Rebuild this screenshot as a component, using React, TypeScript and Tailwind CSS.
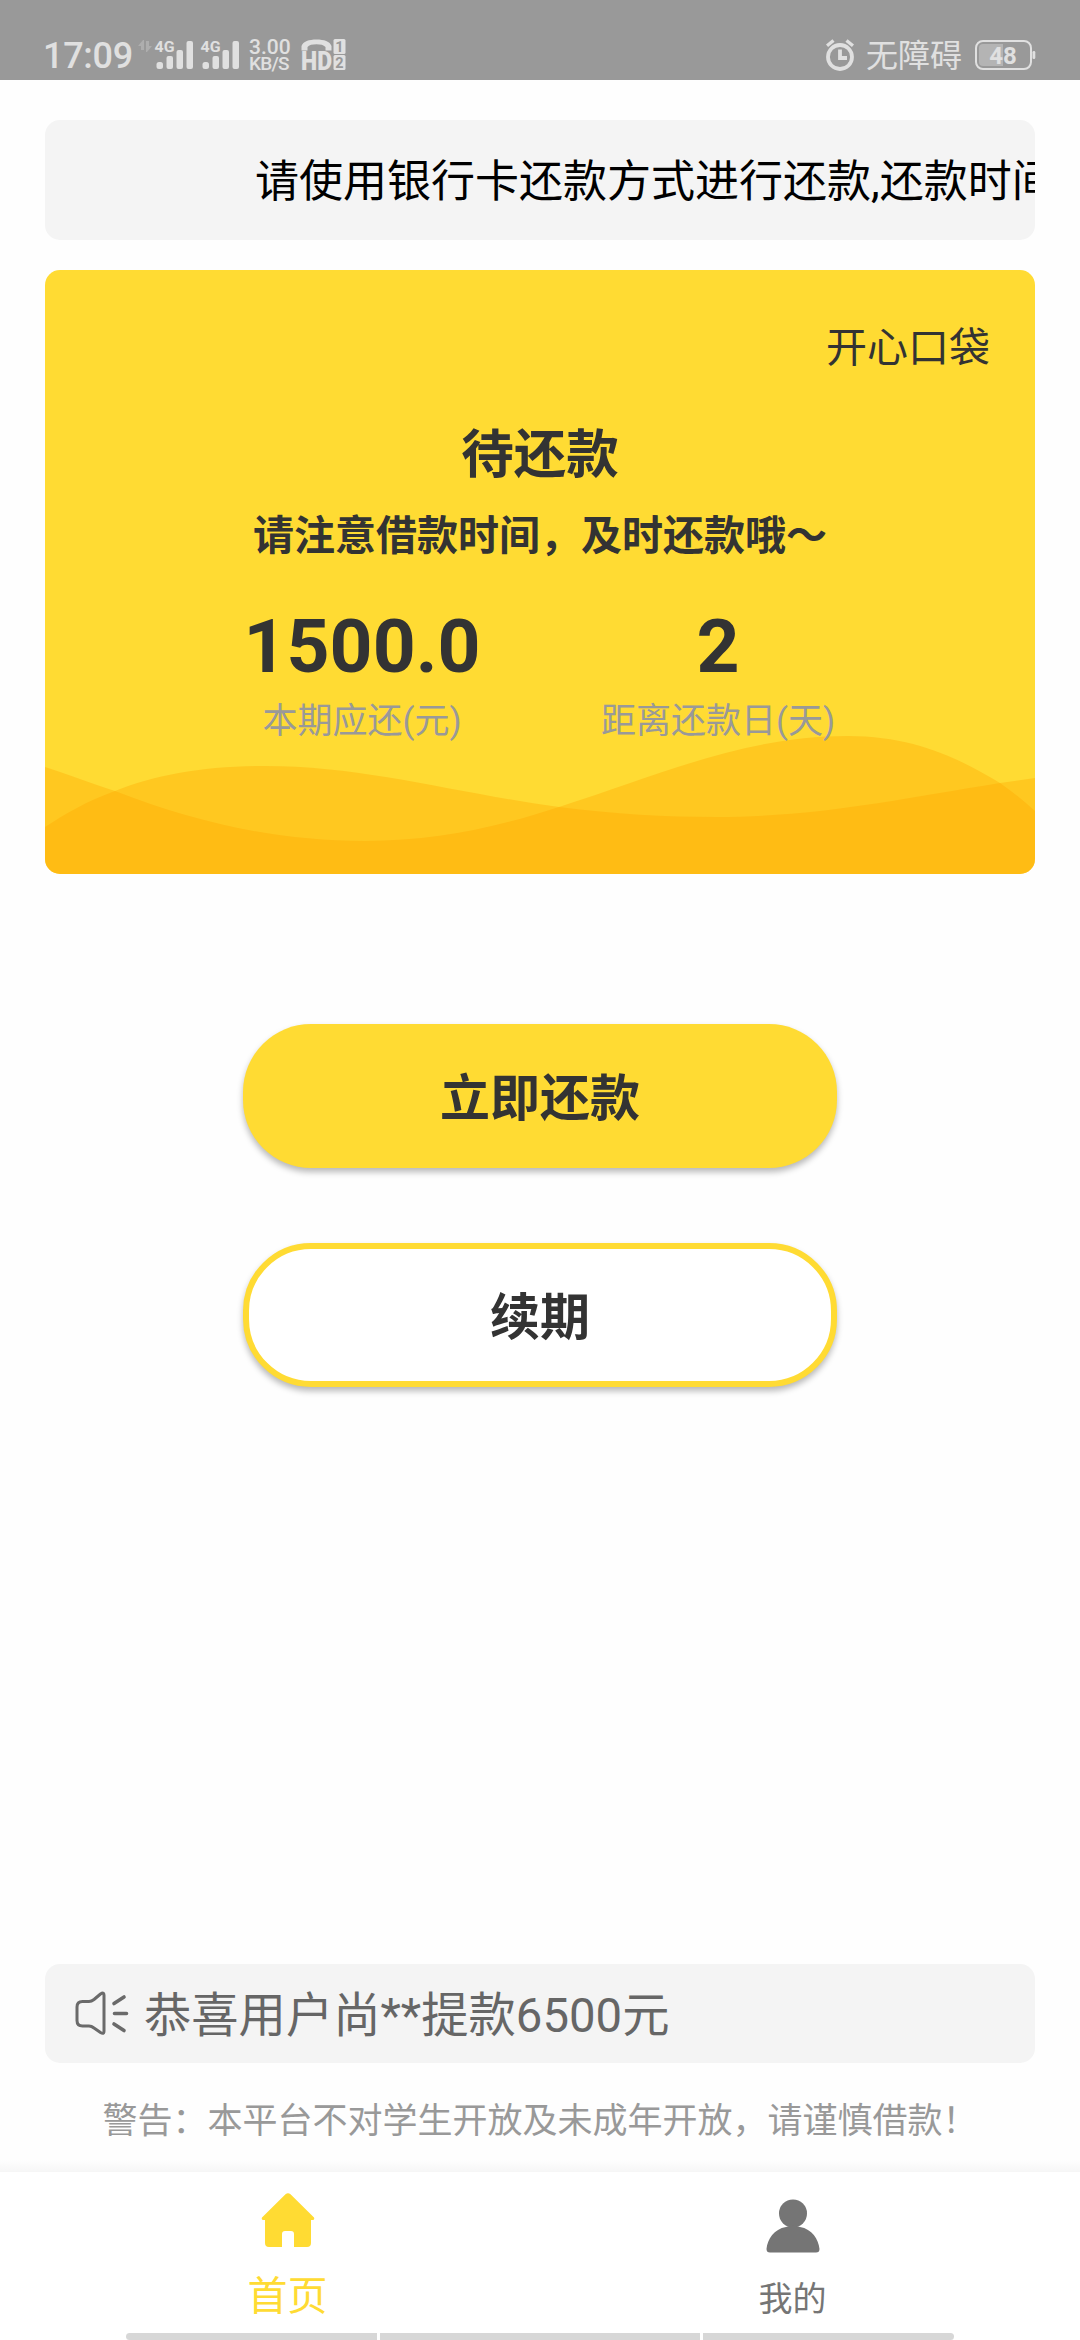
import React from 'react';

// Status bar glyph colour and the bar behind it
const BAR_FG = '#e0e0e0';
const BAR_BG = '#999999';

const SignalIcon: React.FC = () => (
  <svg className="overflow-visible" width="40" height="32" viewBox="0 0 40 32" fill={BAR_FG}>
    <text x="0.5" y="12.5" fontSize="15" fontWeight="700" textLength="20" lengthAdjust="spacingAndGlyphs">
      4G
    </text>
    <rect x="2.5" y="23" width="6.5" height="7" rx="2.5" />
    <rect x="12.5" y="17" width="6.5" height="13" rx="2" />
    <rect x="22.5" y="11" width="6.5" height="19" rx="2" />
    <rect x="32.5" y="2" width="6.5" height="28" rx="2" />
  </svg>
);

const DataArrowsIcon: React.FC = () => (
  <svg width="14" height="12" viewBox="0 0 14 12" fill="#aeaeae">
    <path d="M0 6 5 0h1v10H3V6zM14 6 9 12H8V1h3v5z" />
  </svg>
);

const HdIcon: React.FC = () => (
  <svg className="overflow-visible" width="45" height="32" viewBox="0 0 45 32" fill={BAR_FG}>
    <path d="M.5 11.500V7C2 2.500 8 .5 15.500 .5S29 2.500 30.500 7v4.500h-6V8c-2-2-5-2.700-9-2.700S8 6 6.500 8v3.500z" />
    <text x="0" y="31" fontSize="25" fontWeight="900" textLength="31" lengthAdjust="spacingAndGlyphs">
      HD
    </text>
    <rect x="32.500" y="0" width="12" height="15" rx="1.500" />
    <rect x="32.500" y="16" width="12" height="15" rx="1.500" />
    <g fill={BAR_BG} fontSize="14.500" fontWeight="700" textAnchor="middle">
      <text x="38.300" y="12.800">1</text>
      <text x="38.500" y="28.700">2</text>
    </g>
  </svg>
);

const AlarmIcon: React.FC = () => (
  <svg width="28" height="32" viewBox="0 0 28 32" fill="none" stroke={BAR_FG}>
    <circle cx="14" cy="18" r="12" strokeWidth="3.800" />
    <path d="M14 10.500v8.500h7" strokeWidth="3.800" />
    <path d="M1 6.800 7.500 1.500M27 6.800 20.500 1.500" strokeWidth="3.400" />
  </svg>
);

const BatteryIcon: React.FC = () => (
  <svg width="61" height="30" viewBox="0 0 61 30">
    <rect x="1" y="1" width="55" height="28" rx="7" fill="none" stroke={BAR_FG} strokeWidth="2" />
    <path d="M8 4h20v22H8a4 4 0 0 1-4-4V8a4 4 0 0 1 4-4z" fill="#b4b4b4" />
    <rect x="57.500" y="11" width="2.800" height="8" rx="1.300" fill={BAR_FG} />
    <text x="28" y="24" fontSize="24" fontWeight="700" textAnchor="middle" fill={BAR_FG}>
      48
    </text>
  </svg>
);

const StatusBar: React.FC = () => (
  <div className="flex h-20 items-start justify-between bg-[#999999] pl-[43px] pr-[44px] pt-[39px] text-[#e0e0e0]">
    <div className="flex items-start">
      <span className="w-[95px] text-[36px] font-medium leading-[35px] tracking-[-0.3px]">17:09</span>
      <div className="w-4 pt-px">
        <DataArrowsIcon />
      </div>
      <div className="flex gap-1.5">
        <SignalIcon />
        <SignalIcon />
      </div>
      <div className="ml-[9px] flex w-[52px] flex-col pt-px text-[21px] font-medium leading-[15px]">
        <span>3.00</span>
        <span className="mt-px text-[19px] tracking-[-0.8px]">KB/S</span>
      </div>
      <HdIcon />
    </div>
    <div className="flex items-start">
      <AlarmIcon />
      <span className="ml-3 w-[109px] text-[32px] leading-[34px]">无障碍</span>
      <div className="pt-px">
        <BatteryIcon />
      </div>
    </div>
  </div>
);

// Two overlapping translucent waves at the bottom of the card
const Waves: React.FC = () => (
  <svg className="absolute bottom-0 left-0" width="990" height="140" viewBox="0 0 990 140" fill="#ffa700" fillOpacity="0.36">
    <path d="M0 33C25 41 45 49 70 57C150 88 230 107 320 107C390 107 450 94 514 73C620 39 700 2 803 2C870 2 915 25 955 49C968 58 979 67 990 77V140H0Z" />
    <path d="M0 93C20 80 42 67 70 57C110 41 160 32 220 32C320 32 410 59 514 73C570 80 620 83 671 83C770 83 850 66 955 49L990 44V140H0Z" />
  </svg>
);

interface StatProps {
  value: string;
  label: string;
}

const Stat: React.FC<StatProps> = ({ value, label }) => (
  <div className="flex w-[356px] flex-col items-center">
    <span className="text-[75px] font-bold leading-[88px] text-[#333333]">{value}</span>
    <span className="mt-[11px] text-[35px] leading-[42px] text-[#999999]">{label}</span>
  </div>
);

const LoanCard: React.FC = () => (
  <section className="relative mx-[45px] mt-[30px] h-[604px] overflow-hidden rounded-[15px] bg-[#ffdb33] text-[#333333]">
    <Waves />
    <div className="relative flex flex-col items-center">
      <div className="mt-[53px] self-end pr-[45px] text-[41px] leading-[50px]">开心口袋</div>
      <h1 className="mt-[51px] text-[52.500px] font-bold leading-[62px]">待还款</h1>
      <p className="mt-[25px] text-[41px] font-bold leading-[50px]">请注意借款时间，及时还款哦～</p>
      <div className="mt-[41px] flex">
        <Stat value="1500.0" label="本期应还(元)" />
        <Stat value="2" label="距离还款日(天)" />
      </div>
    </div>
  </section>
);

const SpeakerIcon: React.FC = () => (
  <svg width="54" height="46" viewBox="0 0 54 46" fill="none" stroke="#6a6a6a" strokeWidth="3" strokeLinecap="round" strokeLinejoin="round">
    <path d="M2 16Q2 10.500 7.500 10.500H14Q16.500 10.500 19 8.500L25.500 3Q29 .8 29 4V40Q29 43.800 25.500 41.500L19 37Q16.500 35 14 35H7.500Q2 35 2 29.500Z" />
    <path d="M39 12.500 49 6M39.500 22.500h12M39 33 49 39.500" strokeWidth="3.600" />
  </svg>
);

const HomeIcon: React.FC = () => (
  <svg width="54" height="54" viewBox="0 0 54 54" fill="#ffdb33">
    <path d="M24.500 1.200Q27 -.6 29.500 1.200L53 24.500Q54 27 51.500 27H50V50Q50 54 46 54H33V41Q33 38 30 38H24Q21 38 21 41V54H8Q4 54 4 50V27H2.500Q0 27 1 24.500Z" />
  </svg>
);

const UserIcon: React.FC = () => (
  <svg width="54" height="54" viewBox="0 0 54 54" fill="#757575">
    <circle cx="27" cy="14.500" r="14" />
    <path d="M20 28Q27 25 34 28C46 30 52.500 40 53.500 50Q53.500 53.500 50 53.500H4Q.5 53.500 .5 50C1.500 40 8 30 20 28Z" />
  </svg>
);

const TabBar: React.FC = () => (
  <nav className="flex h-[161px] justify-center bg-white">
    <div className="flex w-[505px] flex-col items-center pt-[21px] text-[#ffdb33]">
      <HomeIcon />
      <span className="mt-[27px] text-[40px] leading-[46px]">首页</span>
    </div>
    <div className="flex w-[505px] flex-col items-center pt-[27px] text-[#757575]">
      <UserIcon />
      <span className="mt-[25px] text-[34px] leading-[42px]">我的</span>
    </div>
  </nav>
);

export default function App() {
  return (
    <div className="flex h-[2340px] w-[1080px] flex-col overflow-hidden bg-[#fefefe] font-['Roboto','Noto_Sans_CJK_SC',sans-serif]">
      <StatusBar />

      {/* Scrolling notice */}
      <div className="mx-[45px] mt-10 flex h-[120px] shrink-0 items-center overflow-hidden rounded-[15px] bg-[#f4f4f4] pl-[210px] pt-[3px]">
        <span className="whitespace-nowrap text-[44px] text-black">请使用银行卡还款方式进行还款,还款时间</span>
      </div>

      <LoanCard />

      <div className="mt-[150px] flex flex-col items-center gap-[75px] text-[50px] font-bold text-[#333333]">
        <button className="h-[144px] w-[594px] rounded-[68px] bg-[#ffdb33] pt-[7px] shadow-[0_4px_6px_rgba(0,0,0,0.28)]">
          立即还款
        </button>
        <button className="h-[144px] w-[594px] rounded-[68px] border-[6px] border-[#ffdb33] bg-white pt-[7px] shadow-[0_4px_6px_rgba(0,0,0,0.28)]">
          续期
        </button>
      </div>

      <div className="mx-[45px] mt-auto flex h-[99px] shrink-0 items-center rounded-[15px] bg-[#f4f4f4] pl-[30px] text-[47.300px] text-[#666666]">
        <SpeakerIcon />
        <span className="ml-[15px] pt-[6px]">恭喜用户尚**提款6500元</span>
      </div>
      <p className="mt-[38px] text-center text-[35px] leading-[42px] text-[#999999]">
        警告：本平台不对学生开放及未成年开放，请谨慎借款！
      </p>

      <div className="mt-[17px] h-3 shrink-0 bg-gradient-to-b from-[#fefefe] to-[#f6f6f6]" />
      <TabBar />

      {/* Gesture hints at the bottom edge */}
      <div className="flex h-[7px] shrink-0 justify-center gap-[3px] bg-white">
        <div className="w-[251px] rounded-l-[5px] bg-[#d7d7d7]" />
        <div className="w-[320px] bg-[#d7d7d7]" />
        <div className="w-[251px] rounded-r-[5px] bg-[#d7d7d7]" />
      </div>
    </div>
  );
}
